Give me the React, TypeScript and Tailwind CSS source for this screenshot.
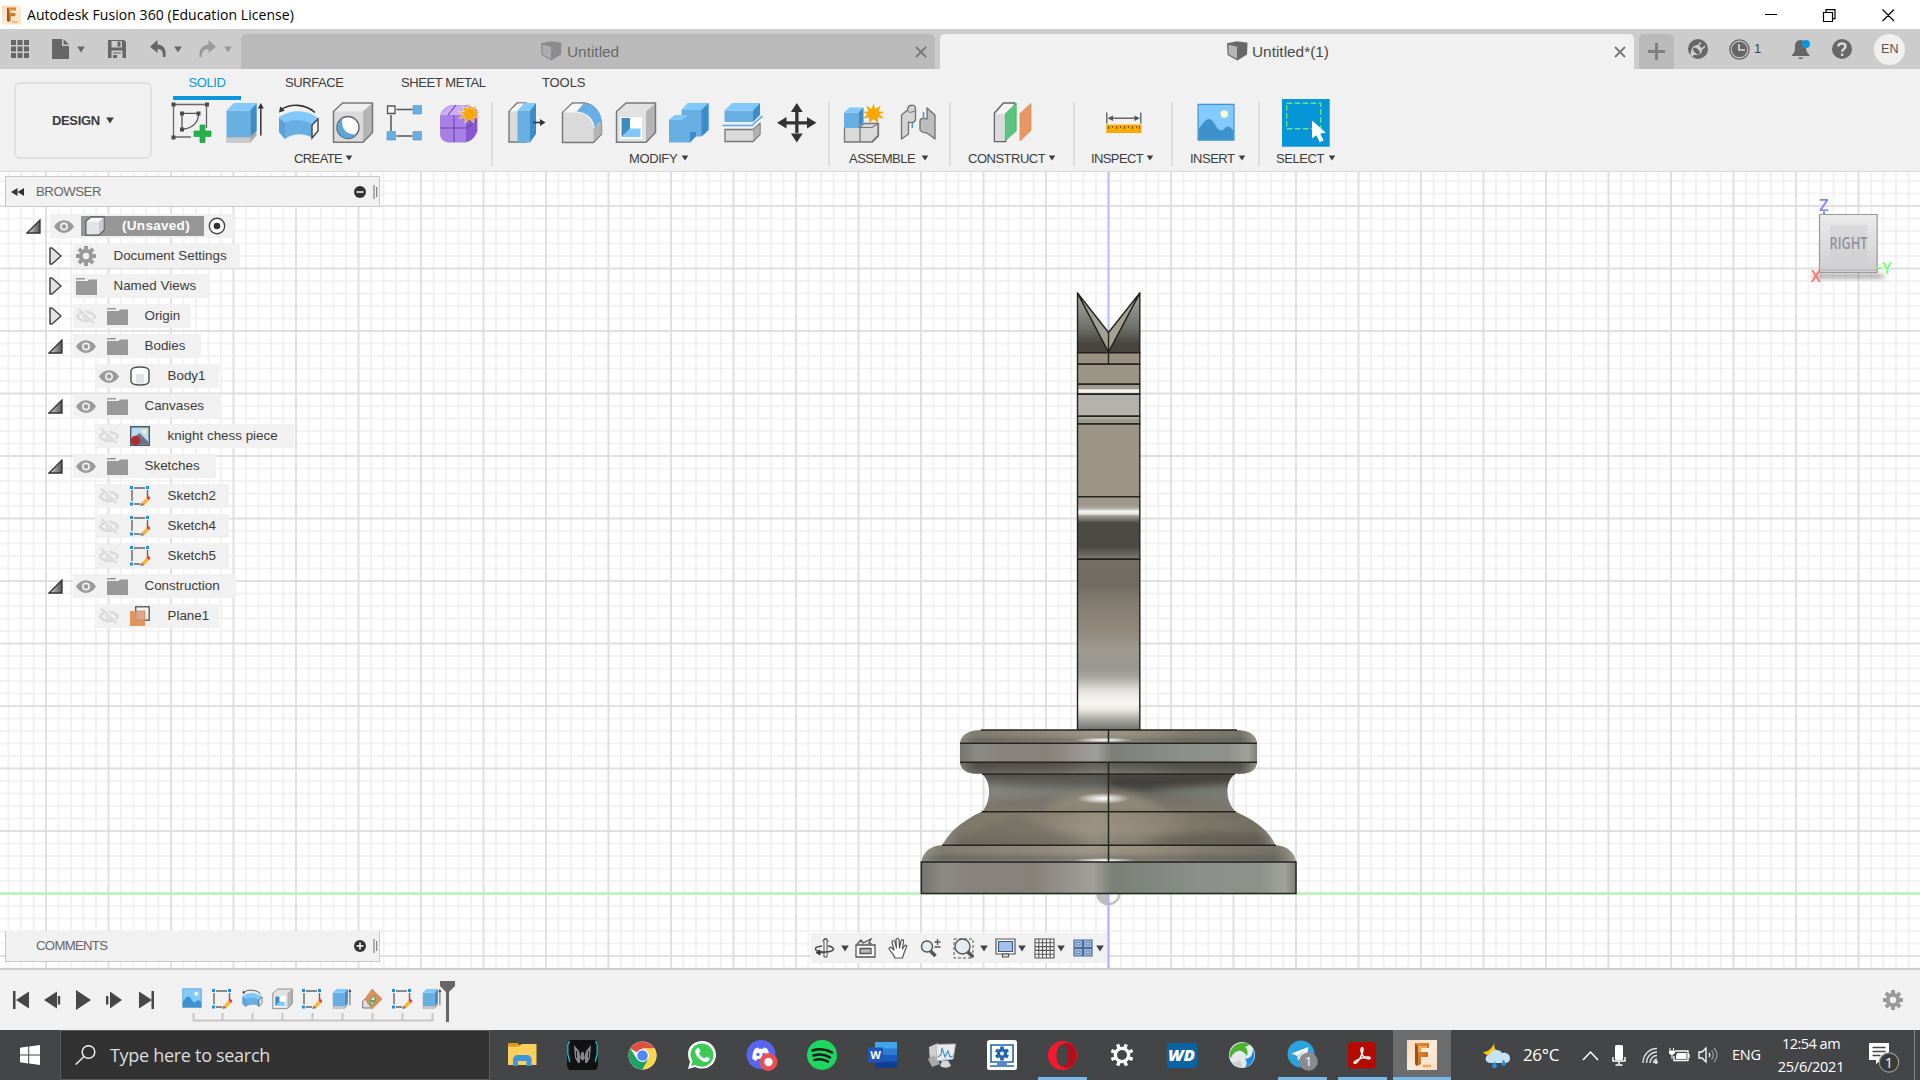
import React, { type ReactNode } from "react";

const ARIAL = "font-['Liberation_Sans',Arial,sans-serif]";
const SEGOE = "font-['Open_Sans','Noto_Sans',sans-serif]";

type IconProps = { className?: string };

/* ---------- shared small glyphs ---------- */

function Caret({ className = "" }: IconProps) {
  return (
    <svg className={className} width="8" height="7" viewBox="0 0 8 7">
      <path d="M.2.500h7.600L4 6.500z" fill="currentColor" />
    </svg>
  );
}

function FusionLogo({ className = "" }: IconProps) {
  return (
    <svg className={className} viewBox="0 0 30 30">
      <defs>
        <linearGradient id="flBg" x1="0" y1="0" x2="1" y2="1">
          <stop offset="0" stopColor="#fbd9b8" />
          <stop offset=".5" stopColor="#fdebda" />
          <stop offset="1" stopColor="#f9dcc0" />
        </linearGradient>
        <linearGradient id="flF" x1="0" y1="0" x2="1" y2="1">
          <stop offset="0" stopColor="#e8913a" />
          <stop offset="1" stopColor="#b8651b" />
        </linearGradient>
      </defs>
      <rect width="30" height="30" fill="url(#flBg)" />
      <path d="M8 3h14v5h-8v4h7v5h-7v7l-4 2-2-2z" fill="url(#flF)" />
      <path d="M8 3l3 3v18l-1 2-2-2z" fill="#9c5414" />
      <path d="M11 6h9v2h-6v4h-3z" fill="#f0a455" />
      <path d="M16 26h8" stroke="#ec9a4c" strokeWidth="2.4" strokeDasharray="2.2 .6" />
    </svg>
  );
}

function TabCube({ light, className = "" }: IconProps & { light?: boolean }) {
  return (
    <svg className={className} width="21" height="20" viewBox="0 0 21 20">
      <path d="M0 2.2L10 .2 20.500 1.800 20 13.500 10.500 19.600.5 14z" fill={light ? "#8b8b8b" : "#686868"} />
      <path d="M1.500 3.800l8.500 2v12L1.500 13.300z" fill={light ? "#aaadad" : "#b4b6b6"} />
    </svg>
  );
}

function CloseX() {
  return (
    <svg width="12" height="12" viewBox="0 0 12 12" fill="none" stroke="#7a7a7a" strokeWidth="1.900">
      <path d="M1 1l10 10M11 1L1 11" />
    </svg>
  );
}

/* ---------- ribbon icons: each viewBox is a window on one 48px tall strip ---------- */

function CreateSketch() {
  return (
    <svg width="42" height="48" viewBox="171 99 42 48" fill="none">
      <path d="M173.500 105v32M175 104.500h30M206.500 106v22M175 137h16" stroke="#666" strokeWidth="1.300" />
      <path d="M182 114v14M184 113.300h13M184 129c8-1 14-6 14.500-14" stroke="#555" strokeWidth="1.300" />
      <path d="M171.500 102.500h4v4h-4zM205 102.500h4v4h-4zM171.500 135.500h4v4h-4zM180 111.500h4v4h-4zM196.500 111.500h4v4h-4zM180 127.500h4v4h-4z" fill="#4b4b4b" />
      <path d="M200 125h5v6h6v5.500h-6v6h-5v-6h-6v-5.500h6z" fill="#25b14c" stroke="#169238" strokeWidth=".6" />
    </svg>
  );
}

function Extrude({ className = "w-10 h-12" }: IconProps) {
  return (
    <svg className={className} viewBox="225 99 40 48">
      <path d="M226.500 137h24l6-7v5.500l-6 7h-24z" fill="#aaa" />
      <path d="M226.500 137.500h24v5h-24z" fill="#c9c9c9" />
      <path d="M226.500 110.500h23.800V137h-23.800z" fill="#67aee3" />
      <path d="M226.500 110.500l7.500-7.500h22.700l-6.400 7.500z" fill="#83c8fb" />
      <path d="M250.300 110.500l6.400-7.500v27.500l-6.400 6.500z" fill="#3c8cc8" />
      <path d="M260.800 106v29.500" stroke="#333" strokeWidth="1.500" />
      <path d="M257.800 108.500l3-5.500 3 5.500z" fill="#333" />
    </svg>
  );
}

function Revolve({ className = "w-[42px] h-12" }: IconProps) {
  return (
    <svg className={className} viewBox="278 99 42 48">
      <path d="M281 109.500c10-6 24-6 34 3" fill="none" stroke="#333" strokeWidth="1.600" />
      <path d="M279 112.500l1.200-6 4.500 4.300z" fill="#333" />
      <path d="M279 117c12-8 28-8 39.500 1.500L312 125c-8-6-20-6-27 0l-6-5z" fill="#83c8fb" />
      <path d="M279 118l6 5c7-4 19-4 27 1v14c-7-5-19-5-27 1l-6-7z" fill="#67aee3" />
      <path d="M285 123v16l-6-7v-14z" fill="#5aa2da" />
      <path d="M312 125l6-6v12l-6 7z" fill="#f4f4f4" stroke="#444" strokeWidth="1.400" />
    </svg>
  );
}

function Hole() {
  return (
    <svg width="42" height="48" viewBox="331.500 99 42 48" strokeLinejoin="round">
      <path d="M333 111.500l9-8.500h30v29.500l-9.500 9.800H333z" fill="#dadada" />
      <path d="M333 111.500l9-8.500h30l-9.500 8.500z" fill="#f0f0f0" />
      <path d="M362.500 111.500l9.500-8.500v29.500l-9.500 9.800z" fill="#b5b5b5" />
      <path d="M333 111.500l9-8.500h30v29.500l-9.500 9.800H333z" fill="none" stroke="#777" strokeWidth="1.500" />
      <circle cx="347.500" cy="127.500" r="11" fill="#fff" stroke="#666" strokeWidth="1.400" />
      <path d="M342 118.500c-2 10 4 17 14 15.500-3 4-10 6-14.500 2.500-5.500-4.500-5.500-14 .5-18z" fill="#5ba6df" />
    </svg>
  );
}

function Pattern() {
  return (
    <svg width="36" height="48" viewBox="385.500 99 36 48">
      <path d="M396 109.500h16M390.500 115v16M396 136h16" stroke="#555" strokeWidth="1.500" />
      <path d="M387 106h7.500v7.500H387z" fill="#f5f5f5" stroke="#555" strokeWidth="1.300" />
      <path d="M412.500 105.500h8.500v8.500h-8.500zM386.500 131.500h8.500v8.500h-8.500zM412.500 131.500h8.500v8.500h-8.500z" fill="#67aee3" stroke="#4a94cf" strokeWidth=".6" />
    </svg>
  );
}

const STAR = "M0-10l1.800 5.400 5.300-3.400-2 5.900 6.200.300-5.400 2.500 4.700 4.400-6.200-1.200.100 6.100-4.500-4.600-4.500 4.600.100-6.100-6.200 1.200 4.700-4.400-5.400-2.500 6.200-.300-2-5.900 5.300 3.400z";

function FormIcon() {
  return (
    <svg width="41" height="48" viewBox="439 99 41 48">
      <path d="M440 116c2-8 8-10.500 14-11h13c8 2 10.500 6 10.500 12v14c-2 6-6 10-12 11.500h-17c-6-1-8.500-4-8.500-9z" fill="#a77fe6" />
      <path d="M441 115c3-7 8-9.500 14-9.500h10c6 1 8 3 8 5-4 4-8 4.500-14 4.500h-13c-2 0-4 1-5 0z" fill="#cdaef5" />
      <path d="M466 116l11-7v22c-2 6-6 10-11 11z" fill="#8859ce" />
      <path d="M440.500 128h26l10.500-7M454 115v27M448 115l8-10" stroke="#6b43a8" strokeWidth="1.100" fill="none" />
      <path transform="translate(469.500 113.500)" d={STAR} fill="#f9a800" stroke="#f0f0f0" strokeWidth=".5" />
    </svg>
  );
}

function PressPull() {
  return (
    <svg width="38" height="48" viewBox="508 99 38 48">
      <path d="M509 111.500l8-8.500h9v39h-17z" fill="#dadada" stroke="#777" strokeWidth="1.400" />
      <path d="M510 111l8-7.500h8l-8 8z" fill="#f7f7f7" />
      <path d="M517.500 110.500H530v32h-12.500z" fill="#67aee3" />
      <path d="M517.500 110.500l7-7.500H536l-6 7.500z" fill="#83c8fb" />
      <path d="M530 110.500l6-7.500v31l-6 8.500z" fill="#3c8cc8" />
      <path d="M533 122.500h8" stroke="#333" strokeWidth="1.600" />
      <path d="M540 119l5.500 3.500-5.500 3.500z" fill="#333" />
    </svg>
  );
}

function Fillet() {
  return (
    <svg width="42" height="48" viewBox="560.500 99 42 48">
      <path d="M562 112.500l10-9.500h12c10 2 16 10 17 22v9l-8 8.500h-31z" fill="#dadada" stroke="#777" strokeWidth="1.400" />
      <path d="M562.700 112.500l9.500-8.800h11l-8.500 8.800z" fill="#f7f7f7" />
      <path d="M593 128l8-6v11.500l-8 8z" fill="#b5b5b5" />
      <path d="M576 112l7.500-9c11 1 17.500 10 17.500 17.500l-7.500 7.500c-1-9-7-15.500-17.500-16z" fill="#67aee3" />
      <path d="M593.500 128c-1-9-7-15.500-17.500-16" fill="none" stroke="#f7f7f7" strokeWidth="1.200" />
    </svg>
  );
}

function Shell({ className = "w-[42px] h-12" }: IconProps) {
  return (
    <svg className={className} viewBox="614.500 99 42 48">
      <path d="M616 111.500l9.500-8.500H655v29.500l-9.500 9.800H616z" fill="#e2e2e2" />
      <path d="M645.500 111.500L655 103v29.500l-9.500 9.800z" fill="#b5b5b5" />
      <path d="M616 111.500l9.500-8.500H655v29.500l-9.500 9.800H616z" fill="none" stroke="#777" strokeWidth="1.500" />
      <path d="M619.500 117h22v22h-22z" fill="#fff" />
      <path d="M621 118h8.500v11L621 137z" fill="#3c8cc8" />
      <path d="M629.500 128.500H640v8.500h-19z" fill="#83c8fb" />
    </svg>
  );
}

function Combine() {
  return (
    <svg width="42" height="48" viewBox="668 99 42 48">
      <path d="M669 120l6-5h6.500v-5l6.500-7h20.500v27l-7 6.500H696l-6 6h-21z" fill="#67aee3" />
      <path d="M669 120l6-5h13l-6 5zM681.500 110l6.500-7h20.500l-7 7z" fill="#83c8fb" />
      <path d="M701.500 110l7-7v27l-7 6.500zM690 132h6v4l-6 6.500z" fill="#3c8cc8" />
    </svg>
  );
}

function SplitBody() {
  return (
    <svg width="42" height="48" viewBox="722 99 42 48">
      <path d="M724.500 110.500H753V122h-28.500z" fill="#67aee3" />
      <path d="M724.500 110.500l7.500-7.500h28l-7 7.500z" fill="#83c8fb" />
      <path d="M753 110.500l7-7.500v12l-7 7z" fill="#3c8cc8" />
      <path d="M722.500 125.500H752l10.500-9.500" stroke="#53a9ea" strokeWidth="1.600" fill="none" />
      <path d="M725 129.500h28l7-6v11l-7 7h-28z" fill="#dadada" stroke="#777" strokeWidth="1.300" />
      <path d="M753 130l6.500-5.500v9.500l-6.500 6.500z" fill="#b0b0b0" />
    </svg>
  );
}

function MoveIcon() {
  return (
    <svg width="40" height="48" viewBox="776.500 99 40 48" fill="#333">
      <path d="M794.700 112v9.200H786v3.300h8.700v8.500h3.300v-8.500h8.500v-3.300H798V112h4.200l-5.900-9-5.900 9zM786 117l-9.500 5.800 9.500 5.700zM806.500 117l9.500 5.800-9.500 5.700zM790.400 133.500h11.800l-5.900 9z" />
    </svg>
  );
}

function NewComponent() {
  return (
    <svg width="42" height="48" viewBox="843 99 42 48">
      <path d="M844.500 127H860v15h-15.500zM860 127l4-3.500h14.500V136l-6 6H860z" fill="#dadada" stroke="#777" strokeWidth="1.300" />
      <path d="M860 127.500h12l6-4v12l-6 6" fill="none" stroke="#777" strokeWidth="1.200" />
      <path d="M844 112.500h14.500V128H844z" fill="#67aee3" />
      <path d="M844 112.500l5.500-5H864l-5.500 5z" fill="#83c8fb" />
      <path d="M858.500 112.500l5-5v15l-5 5z" fill="#3c8cc8" />
      <path transform="translate(873.500 113.500)" d={STAR} fill="#f9a800" />
    </svg>
  );
}

function Joint() {
  return (
    <svg width="37" height="48" viewBox="899.500 99 37 48" strokeLinejoin="round">
      <path d="M901 115l6-5c0-6 8-6 8-2v12c-1 3-5 3-7 2v12l-7 5z" fill="#d4d4d4" stroke="#707070" strokeWidth="1.300" />
      <path d="M934.500 115l-8-7v11c-3-1-7-1-7 2v9c2 3 5 3 7 3l8 6z" fill="#bdbdbd" stroke="#707070" strokeWidth="1.300" />
      <path d="M907 110c0 3 5 3 8 0" fill="none" stroke="#707070" />
      <path d="M911.800 122v6M923 112v7" stroke="#3d9ae0" strokeWidth="1.500" />
    </svg>
  );
}

function Construct() {
  return (
    <svg width="40" height="48" viewBox="993 99 40 48">
      <path d="M994.500 113l9-10h11v8l-9 30.500h-11z" fill="#f5f5f5" stroke="#666" strokeWidth="1.500" />
      <path d="M995.200 114H1004v27h-8.800z" fill="#dadada" />
      <path d="M1005 114l11.300-11v28l-11.300 10z" fill="#5bc57f" stroke="#48ad6c" strokeWidth=".6" />
      <path d="M1020 113.500l11-10v27l-11 10.500z" fill="#e79763" stroke="#cf7f4a" strokeWidth=".6" />
    </svg>
  );
}

function Inspect() {
  return (
    <svg width="38" height="48" viewBox="1105 99 38 48">
      <path d="M1106.800 112.500v11M1140.800 112.500v11M1111 118.200h26" stroke="#666" strokeWidth="1.400" />
      <path d="M1107.500 118.200l5.500-2.700v5.400zM1140 118.200l-5.500-2.700v5.400z" fill="#555" />
      <path d="M1106.300 124.500h35.200v8.500h-35.200z" fill="#fba900" />
      <path d="M1108.500 126v3M1112.500 126v2M1116.500 126v3M1120.500 126v2M1124.500 126v3M1128.500 126v2M1132.500 126v3M1136.500 126v2M1139.500 126v3" stroke="#7a5200" strokeWidth="1.100" />
    </svg>
  );
}

function InsertImage({ className = "w-[38px] h-12" }: IconProps) {
  return (
    <svg className={className} viewBox="1196.500 99 38 48">
      <path d="M1197.600 104.300h35.900v35.900h-35.900z" fill="#82caff" stroke="#3f93cf" strokeWidth="1.200" />
      <path d="M1198 129c5-6 7-10 10.500-10 5 0 7 11 12 11.500 3 0 4-4 7-4 2.500 0 3.500 2.500 5.500 4v9.200h-35z" fill="#3d92ce" />
      <circle cx="1223.800" cy="114" r="3.800" fill="#fdfbd2" />
    </svg>
  );
}

function SelectIcon() {
  return (
    <svg width="48" height="48" viewBox="1282.300 99 48 48">
      <path d="M1282.300 99h47.700v47.700h-47.700z" fill="#0696d7" />
      <path d="M1287 103.200h34v25.600h-34z" fill="none" stroke="#6be08a" strokeWidth="1.400" strokeDasharray="5.500 2.500" />
      <path d="M1312.300 120.500v18l4.400-3.300 3.300 7 3.800-1.600-3.200-7 5.600-.8z" fill="#fff" />
    </svg>
  );
}

/* ---------- title bar and document tabs ---------- */

function TitleBar() {
  return (
    <header className={`flex h-[29px] items-center bg-white text-black ${SEGOE}`}>
      <FusionLogo className="ml-[2px] h-5 w-[19px]" />
      <span className="ml-[6px] whitespace-nowrap text-[14px] leading-none tracking-[0.06px]">Autodesk Fusion 360 (Education License)</span>
      <svg className="ml-auto mr-[25px]" width="130" height="14" viewBox="0 0 130 14" fill="none" stroke="#000" strokeWidth="1.200">
        <path d="M0 6.500h12M58.500 4.500h9v9h-9zM61 4.500V1.600h9v9h-2.500M117.500 1.500l11.500 11.500M129 1.500L117.500 13" />
      </svg>
    </header>
  );
}

function QuickAccess() {
  return (
    <div className="flex w-[241px] shrink-0 items-center text-[#666]">
      <svg className="ml-[11px]" width="18" height="18" viewBox="0 0 18 18" fill="currentColor">
        <path d="M0 0h5v5H0zM6.500 0h5v5h-5zM13 0h5v5h-5zM0 6.500h5v5H0zM6.500 6.500h5v5h-5zM13 6.500h5v5h-5zM0 13h5v5H0zM6.500 13h5v5h-5zM13 13h5v5h-5z" />
      </svg>
      <svg className="ml-[23px]" width="17" height="20" viewBox="0 0 17 20" fill="currentColor">
        <path d="M0 0h10v7h7v13H0zM11.500 0L17 5.500h-5.500z" />
      </svg>
      <Caret className="ml-2" />
      <svg className="ml-[23px]" width="18" height="18" viewBox="0 0 18 18">
        <path d="M0 0h16l2 2v16H0z" fill="currentColor" />
        <path d="M3.500 1h10.500v6.500H3.500zM3.500 10.500h11V18h-11z" fill="#ccc" />
        <path d="M9.500 1.500h3v5h-3zM5 12.500h8v1H5zM5 15h4v3H5z" fill="currentColor" />
      </svg>
      <svg className="ml-6" width="17" height="18" viewBox="0 0 17 18">
        <path d="M7.500 0v4.500c6 .3 9 4.500 8 12.500h-2.500c0-5-1-8-5.500-8V13L0 6.700z" fill="currentColor" />
      </svg>
      <Caret className="ml-[7px]" />
      <svg className="ml-[17px] text-[#999]" width="17" height="18" viewBox="0 0 17 18">
        <path d="M9.500 0v4.500c-6 .3-9.500 4.500-9 12.500h2.300c0-5 1.700-8 6.700-8V13L17 6.700z" fill="currentColor" />
      </svg>
      <Caret className="ml-2 text-[#999]" />
    </div>
  );
}

function DocumentTabs() {
  return (
    <div className={`flex h-10 bg-[#ccc] ${ARIAL}`}>
      <QuickAccess />
      <div className="mt-[5px] flex w-[694px] items-center rounded-t-[5px] bg-[#bababa] text-[15.4px] text-[#696969]">
        <TabCube light className="ml-[300px] -mt-[2px]" />
        <span className="ml-[5px]">Untitled</span>
        <span className="ml-auto mr-2"><CloseX /></span>
      </div>
      <div className="ml-[5px] mt-[5px] flex w-[694px] items-center rounded-t-[5px] bg-[#f1f1f1] text-[15.4px] text-[#4a4a4a]">
        <TabCube className="ml-[287px] -mt-[2px]" />
        <span className="ml-[4px]">Untitled*(1)</span>
        <span className="ml-auto mr-2"><CloseX /></span>
      </div>
      <div className="ml-[5px] mt-[5px] flex w-[35px] items-center justify-center rounded-t-[5px] bg-[#bababa]">
        <svg width="17" height="17" viewBox="0 0 17 17" fill="#808080"><path d="M7 0h3v7h7v3h-7v7H7v-7H0V7h7z" /></svg>
      </div>
      <div className="flex flex-1 items-center text-[#666]">
        <svg className="ml-[14px]" width="20" height="20" viewBox="0 0 20 20">
          <circle cx="10" cy="10" r="10" fill="currentColor" />
          <path d="M3 16c1-4 1-8 5-9 2-.5 3 .5 4 1.500s1.500 2.500 1 4c-1 3-5 3-8 2.500zM9 8l4-4.500M12.500 11.500L17 7" fill="#ccc" stroke="#ccc" strokeWidth="1.700" />
          <path d="M5 17.500c-2-4-1-7 2-9" stroke="#ccc" strokeWidth="1.500" fill="none" />
          <path d="M7 10.500l3 3" stroke="#666" strokeWidth="4" strokeLinecap="round" />
        </svg>
        <svg className="ml-[21px]" width="21" height="21" viewBox="0 0 21 21" fill="none">
          <circle cx="10.500" cy="10.500" r="9.600" stroke="currentColor" strokeWidth="1.400" />
          <circle cx="10.500" cy="10.500" r="7.800" fill="currentColor" />
          <path d="M10 5v6h6" stroke="#ddd" strokeWidth="1.600" />
        </svg>
        <span className="ml-1 text-[13px] text-[#444]">1</span>
        <svg className="ml-[31px]" width="19" height="21" viewBox="0 0 19 21">
          <path d="M8.500 1c4 0 5.500 3 5.500 6.500 0 5 1.500 6.500 3.500 8.500v1H0v-1c2-2 3-3.500 3-8.500C3 4 4.500 1 8.500 1zM6 18.500h5.500c-1 2-4.500 2-5.500 0z" fill="currentColor" />
          <circle cx="14" cy="5" r="4" fill="#0696d7" />
        </svg>
        <svg className="ml-[21px]" width="20" height="20" viewBox="0 0 20 20">
          <circle cx="10" cy="10" r="10" fill="currentColor" />
          <path d="M6.300 7.500C6.500 3.500 13.500 3.500 13.500 7.500c0 2.500-3.400 2.500-3.400 5.300M10.100 14.500v2.500" fill="none" stroke="#d8d8d8" strokeWidth="2.400" />
        </svg>
        <span className="ml-[22px] flex h-[31px] w-[31px] items-center justify-center rounded-full bg-[#f0f0f0] text-[12.500px] text-[#555]">EN</span>
      </div>
    </div>
  );
}

/* ---------- ribbon ---------- */

function RibbonGroup({ className, pad, label, labelWidth, last, children }: {
  className: string; pad: string; label: string; labelWidth: string; last?: boolean; children: ReactNode;
}) {
  return (
    <>
      <section className={`shrink-0 ${className}`}>
        <div className="flex h-12 items-start">{children}</div>
        <div className={`mt-[4px] flex h-4 items-center text-[13px] text-[#3c3c3c] ${pad}`}>
          <span className={`whitespace-nowrap ${labelWidth}`}>{label}</span>
          <Caret className="-mt-[3px] h-[6px]" />
        </div>
      </section>
      {!last && <div className="mt-[3px] h-16 w-[2px] shrink-0 bg-[#dcdcdc]" />}
    </>
  );
}

function Ribbon() {
  return (
    <div className={`flex h-[102px] bg-[#f1f1f1] text-[13px] text-[#3c3c3c] ${ARIAL}`}>
      <div className="w-[160px] shrink-0 pl-[14px] pt-[13px]">
        <button className="flex h-[77px] w-[138px] items-center rounded-[6px] border-2 border-[#e0e0e0] pl-9 text-[13px] font-bold tracking-[-0.35px]">
          <span className="w-[54px] text-left">DESIGN</span>
          <Caret className="h-[7px]" />
        </button>
      </div>
      <div className="flex-1">
        <nav className="flex h-[30px] tracking-[-0.4px]">
          <span className="ml-[13px] -mb-px flex h-[31px] w-[68px] justify-center border-b-4 border-[#0d97d8] pt-[4px] text-[#0d97d8]">SOLID</span>
          <span className="ml-[44px] w-[116px] pt-[4px]">SURFACE</span>
          <span className="w-[141px] pt-[4px]">SHEET METAL</span>
          <span className="pt-[4px] tracking-[-0.1px]">TOOLS</span>
        </nav>
        <div className="flex">
          <RibbonGroup className="w-[331px]" pad="pl-[134px]" label="CREATE" labelWidth="w-[51px] tracking-[-0.6px]">
            <span className="ml-[11px]"><CreateSketch /></span>
            <span className="ml-3"><Extrude /></span>
            <span className="ml-[13px]"><Revolve /></span>
            <span className="ml-[11.500px]"><Hole /></span>
            <span className="ml-3"><Pattern /></span>
            <span className="ml-[17.500px]"><FormIcon /></span>
          </RibbonGroup>
          <RibbonGroup className="w-[335px]" pad="pl-[136px]" label="MODIFY" labelWidth="w-[52px] tracking-[-0.4px]">
            <span className="ml-[15px]"><PressPull /></span>
            <span className="ml-[14.500px]"><Fillet /></span>
            <span className="ml-3"><Shell /></span>
            <span className="ml-[11.500px]"><Combine /></span>
            <span className="ml-3"><SplitBody /></span>
            <span className="ml-[12.500px]"><MoveIcon /></span>
          </RibbonGroup>
          <RibbonGroup className="w-[119px]" pad="pl-[19px]" label="ASSEMBLE" labelWidth="w-[72px] tracking-[-0.5px]">
            <span className="ml-[13px]"><NewComponent /></span>
            <span className="ml-[14.500px]"><Joint /></span>
          </RibbonGroup>
          <RibbonGroup className="w-[122px]" pad="pl-[17px]" label="CONSTRUCT" labelWidth="w-[80px] tracking-[-0.5px]">
            <span className="ml-[42px]"><Construct /></span>
          </RibbonGroup>
          <RibbonGroup className="w-[96px]" pad="pl-4" label="INSPECT" labelWidth="w-[55px] tracking-[-0.6px]">
            <span className="ml-[30px]"><Inspect /></span>
          </RibbonGroup>
          <RibbonGroup className="w-[85px]" pad="pl-[17px]" label="INSERT" labelWidth="w-[48px] tracking-[-0.5px]">
            <span className="ml-[23.500px]"><InsertImage /></span>
          </RibbonGroup>
          <RibbonGroup className="w-[86px]" pad="pl-4" label="SELECT" labelWidth="w-[52px] tracking-[-0.45px]" last>
            <span className="ml-[22px]"><SelectIcon /></span>
          </RibbonGroup>
        </div>
      </div>
    </div>
  );
}

/* ---------- browser panel ---------- */

function Eye() {
  return (
    <svg width="20" height="13" viewBox="0 0 20 13">
      <path d="M0 6.500C5-2 15-2 20 6.500 15 15 5 15 0 6.500z" fill="#9a9a9a" />
      <circle cx="10" cy="6.500" r="4" fill="#f1f1f1" />
      <circle cx="10" cy="6.500" r="2.300" fill="#9a9a9a" />
    </svg>
  );
}

function EyeOff() {
  return (
    <svg width="20" height="16" viewBox="0 0 20 16" fill="none" stroke="#d9d9d9">
      <path d="M1 8.500c4-6 14-6 18 0-4 6-14 6-18 0z" strokeWidth="2.400" />
      <circle cx="10" cy="8.500" r="2.500" strokeWidth="1.600" />
      <path d="M3 0l16 16" stroke="#f1f1f1" strokeWidth="4" />
      <path d="M2.500 1L17.500 15" strokeWidth="2" />
    </svg>
  );
}

function Folder() {
  return (
    <svg width="21" height="17" viewBox="0 0 21 17" fill="#999">
      <path d="M0 0h9v1.500H0zM0 3h9l2.500 0L13 1.500h8V17H0z" />
    </svg>
  );
}

function Gear({ className = "" }: IconProps) {
  return (
    <svg className={className} width="20" height="20" viewBox="-10 -10 20 20">
      <g fill="#9a9a9a">
        {[0, 45, 90, 135].map((a) => (
          <rect key={a} x="-2" y="-10" width="4" height="20" transform={`rotate(${a})`} />
        ))}
        <circle r="7.200" />
      </g>
      <circle r="3.200" fill="#f1f1f1" />
    </svg>
  );
}

function Sketch({ className = "" }: IconProps) {
  return (
    <svg className={className} width="20" height="20" viewBox="0 0 20 20">
      <path d="M2 4v11M4 2h11M17.500 4v7M4 18h6" stroke="#666" strokeWidth="1.400" fill="none" />
      <path d="M0 0h3v3H0zM16 0h3v3h-3zM0 16.500h3v3H0z" fill="#1b8fe6" />
      <path d="M12 17l5.500-6 2 2-5 5.500z" fill="#fbb733" stroke="#fbb733" />
      <path d="M17 11.500l1.500-1.300 1.500 2-1.300 1.300z" fill="#ee3b46" stroke="#ee3b46" />
      <path d="M10.500 19.500l1-2.500 2.500 2z" fill="#777" stroke="#777" strokeWidth=".5" />
    </svg>
  );
}

function BodyIcon() {
  return (
    <svg width="20" height="20" viewBox="0 0 20 20">
      <path d="M1 5c0-2.500 2-4 9-4s9 1.500 9 4v10c0 2.500-2 4-9 4s-9-1.500-9-4z" fill="#fff" stroke="#4c5560" strokeWidth="1.500" />
      <path d="M6 8h8v9.500c-3 .5-5 .3-8 0z" fill="#e1e3e8" />
    </svg>
  );
}

function CanvasIcon() {
  return (
    <svg width="20" height="20" viewBox="0 0 20 20">
      <path d="M.7.700h18.600v18.600H.7z" fill="#b6ddf5" stroke="#4b5867" strokeWidth="1.400" />
      <path d="M1.500 13l8-6 9 9v2.500h-17z" fill="#6b7482" />
      <circle cx="14.500" cy="5.500" r="2.200" fill="#fff2a8" />
      <circle cx="5.500" cy="14.500" r="4" fill="#8a3b45" stroke="#d31c2b" strokeWidth="1.500" />
      <path d="M3 17l5-5" stroke="#d31c2b" strokeWidth="1.400" />
    </svg>
  );
}

function PlaneIcon() {
  return (
    <svg width="20" height="20" viewBox="0 0 20 20">
      <path d="M5.700.8h13.500v13.500H5.700z" fill="#f3f3f3" stroke="#666" strokeWidth="1.500" />
      <path d="M0 5h15v15H0z" fill="#e2945f" />
      <path d="M6 5h9v9H6z" fill="#dba988" stroke="#c98655" strokeWidth=".8" />
    </svg>
  );
}

function DocCube() {
  return (
    <svg width="20" height="20" viewBox="0 0 20 20" strokeLinejoin="round">
      <path d="M1 5l5-4h13v13l-5 5H1z" fill="#fbfbfb" stroke="#5a6068" strokeWidth="1.400" />
      <path d="M1.800 5.500H14v12.700H1.800z" fill="#e2e4ea" />
      <path d="M14 5.500L18.500 1.500v12L14 18z" fill="#c8ccd4" />
    </svg>
  );
}

function Twisty({ open }: { open?: boolean }) {
  return open ? (
    <svg width="15" height="15" viewBox="0 0 15 15">
      <defs>
        <linearGradient id="tw" x1="0" x2="1"><stop offset="0" stopColor="#ddd" /><stop offset="1" stopColor="#555" /></linearGradient>
      </defs>
      <path d="M1 14L14 1v13z" fill="url(#tw)" stroke="#333" strokeWidth="1.300" />
    </svg>
  ) : (
    <svg width="13" height="18" viewBox="0 0 13 18">
      <path d="M1 1l2 0 9 8-9 8-2 0z" fill="#e3e3e3" stroke="#444" strokeWidth="1.500" strokeLinejoin="round" />
    </svg>
  );
}

type Row = { indent: string; twisty?: "open" | "closed"; eye?: "on" | "off"; icon: ReactNode; label: string; box: string };

const ROWS: Row[] = [
  { indent: "pl-[49px]", twisty: "closed", icon: <Gear />, label: "Document Settings", box: "w-[167px]" },
  { indent: "pl-[49px]", twisty: "closed", icon: <Folder />, label: "Named Views", box: "w-[137px]" },
  { indent: "pl-[49px]", twisty: "closed", eye: "off", icon: <Folder />, label: "Origin", box: "w-[118px]" },
  { indent: "pl-[48px]", twisty: "open", eye: "on", icon: <Folder />, label: "Bodies", box: "w-[128px]" },
  { indent: "pl-[95px]", eye: "on", icon: <BodyIcon />, label: "Body1", box: "w-[124px]" },
  { indent: "pl-[48px]", twisty: "open", eye: "on", icon: <Folder />, label: "Canvases", box: "w-[148px]" },
  { indent: "pl-[95px]", eye: "off", icon: <CanvasIcon />, label: "knight chess piece", box: "w-[199px]" },
  { indent: "pl-[48px]", twisty: "open", eye: "on", icon: <Folder />, label: "Sketches", box: "w-[143px]" },
  { indent: "pl-[95px]", eye: "off", icon: <Sketch />, label: "Sketch2", box: "w-[134px]" },
  { indent: "pl-[95px]", eye: "off", icon: <Sketch />, label: "Sketch4", box: "w-[134px]" },
  { indent: "pl-[95px]", eye: "off", icon: <Sketch />, label: "Sketch5", box: "w-[134px]" },
  { indent: "pl-[48px]", twisty: "open", eye: "on", icon: <Folder />, label: "Construction", box: "w-[163px]" },
  { indent: "pl-[95px]", eye: "off", icon: <PlaneIcon />, label: "Plane1", box: "w-[124px]" },
];

function TreeRow({ row }: { row: Row }) {
  return (
    <li className={`flex h-[30px] items-center ${row.indent}`}>
      {row.twisty && (
        <span className={row.twisty === "open" ? "w-[25px]" : "w-6"}><Twisty open={row.twisty === "open"} /></span>
      )}
      <div className={`flex h-6 items-center bg-[#f1f1f1] ${row.box} ${row.twisty ? "pl-[3px]" : "pl-[4px]"}`}>
        {row.eye && <span className="w-[31px] shrink-0">{row.eye === "on" ? <Eye /> : <EyeOff />}</span>}
        <span className="w-[37.500px] shrink-0">{row.icon}</span>
        <span className="whitespace-nowrap pt-px text-[13.400px] text-[#3c3c3c] [font-kerning:none]">{row.label}</span>
      </div>
    </li>
  );
}

function GripBars() {
  return (
    <svg width="5" height="14" viewBox="0 0 5 14"><path d="M1 0v14M3.700 2v10" stroke="#777" strokeWidth="1.100" /></svg>
  );
}

function BrowserPanel() {
  return (
    <aside className={`absolute left-0 top-[5px] ${ARIAL}`}>
      <div className="ml-[5px] flex h-[31px] w-[375px] items-center border border-[#c8c8c8] bg-[#f1f1f1] text-[13.200px] text-[#666]">
        <svg className="ml-[5px]" width="13" height="8" viewBox="0 0 13 8" fill="#333"><path d="M6.500 0v8L0 4zM13 0v8L6.500 4z" /></svg>
        <span className="ml-3 tracking-[-0.45px]">BROWSER</span>
        <svg className="ml-auto mr-[7.500px]" width="12" height="12" viewBox="0 0 12 12"><circle cx="6" cy="6" r="6" fill="#333" /><path d="M2.500 6h7" stroke="#fff" strokeWidth="1.500" /></svg>
        <span className="mr-px"><GripBars /></span>
      </div>
      <ul className="mt-[4px]">
        <li className="flex h-[30px] items-center pl-[26px]">
          <span className="w-6"><Twisty open /></span>
          <div className="flex h-6 w-[184px] items-center bg-[#f1f1f1] pl-1">
            <span className="w-[27px]"><Eye /></span>
            <div className="flex h-5 w-[123px] items-center bg-[#969696] pl-1 text-[13.500px] font-bold text-white">
              <DocCube />
              <span className="ml-[17px] tracking-[0.3px]">(Unsaved)</span>
            </div>
            <svg className="ml-1" width="18" height="18" viewBox="0 0 18 18"><circle cx="9" cy="9" r="7.700" fill="#fff" stroke="#444" strokeWidth="1.400" /><circle cx="9" cy="9" r="3.300" fill="#333" /></svg>
          </div>
        </li>
        {ROWS.map((row) => <TreeRow key={row.label} row={row} />)}
      </ul>
    </aside>
  );
}

function CommentsPanel() {
  return (
    <div className={`absolute left-[5px] top-[760px] flex h-[31px] w-[375px] items-center border border-t-0 border-[#c8c8c8] bg-[#f1f1f1] text-[13.200px] text-[#666] ${ARIAL}`}>
      <span className="ml-[30px] tracking-[-0.7px]">COMMENTS</span>
      <svg className="ml-auto mr-[7.500px]" width="12" height="12" viewBox="0 0 12 12"><circle cx="6" cy="6" r="6" fill="#333" /><path d="M2.500 6h7M6 2.500v7" stroke="#fff" strokeWidth="1.500" /></svg>
      <span className="mr-px"><GripBars /></span>
    </div>
  );
}

function NavBar() {
  return (
    <div className="absolute left-[811px] top-[762px] flex h-[30px] w-[296px] items-center bg-[#f1f1f1] text-[#444]">
      <svg className="ml-[4px]" width="20" height="20" viewBox="0 0 20 20" fill="none" stroke="#444">
        <path d="M9 1h3v18H9zM7.500 3.500L10.500 0l3 3.500" fill="#fff" strokeWidth="1" />
        <path d="M7 8c-9 1-9 5 1 6 8 .5 12-2 10-4-1-1-3-2-5-2M4 14.500h6" strokeWidth="1.500" />
        <path d="M5 12v5l-4-2.500z" fill="#333" />
      </svg>
      <Caret className="ml-[6px]" />
      <svg className="ml-[6px]" width="21" height="20" viewBox="0 0 21 20" fill="none" stroke="#555" strokeWidth="1.300">
        <path d="M1 7h19v12H1z" fill="#fff" /><path d="M5 10.500h11v5H5z" fill="#b8bcc2" /><path d="M2 6l4-4 2 3 8-4-2 4 3 1" fill="#ddd" />
      </svg>
      <svg className="ml-3" width="21" height="21" viewBox="0 0 21 21" fill="#fff" stroke="#555" strokeWidth="1.200" strokeLinejoin="round">
        <path d="M7 20c-1-4-4-6-6-9 0-2 2-2 3-1l2 2-2-8c0-2 2-2 3 0l1.500 6-.5-8c0-2 2.500-2 3 0l.5 8 1.500-7c.5-2 2.500-1.500 2.500 0l-1 8 2-3c1-1.500 3-1 2 1-2 4-3 7-4 11z" />
      </svg>
      <svg className="ml-[11px]" width="21" height="20" viewBox="0 0 21 20" fill="none" stroke="#555">
        <path d="M10.500 13l5 5" strokeWidth="3.500" /><circle cx="7" cy="8.500" r="5.500" fill="#e3edf1" strokeWidth="1.400" /><path d="M17.500 1v6M14.500 4h6M14.500 9h6" strokeWidth="1.300" />
      </svg>
      <svg className="ml-[12px]" width="21" height="21" viewBox="0 0 21 21" fill="none" stroke="#555">
        <path d="M1 1h19v19H1z" strokeDasharray="3 2" /><path d="M14 13l6 6" strokeWidth="3.500" /><circle cx="9.500" cy="8.500" r="7.500" fill="#e3edf1" strokeWidth="1.400" />
      </svg>
      <Caret className="ml-[6px]" />
      <svg className="ml-[7px]" width="21" height="21" viewBox="0 0 21 21" stroke="#555" strokeWidth="1.200">
        <path d="M1 1h19v15H1z" fill="#fff" /><path d="M3.500 3.500h14v10h-14z" fill="#a5c2ea" stroke="#39598c" /><path d="M7.500 16h6v3h-6z" fill="#ddd" />
      </svg>
      <Caret className="ml-[2px]" />
      <svg className="ml-[8px]" width="21" height="21" viewBox="0 0 21 21" stroke="#555" strokeWidth="1.100" fill="#fff">
        <path d="M1 1h19v19H1zM4.800 1v19M8.600 1v19M12.400 1v19M16.200 1v19M1 4.800h19M1 8.600h19M1 12.400h19M1 16.200h19" />
      </svg>
      <Caret className="ml-[2px]" />
      <svg className="ml-[8px]" width="20" height="18" viewBox="0 0 20 18" stroke="#4b6a98" strokeWidth="1.200" fill="#9db9e0">
        <path d="M1 1h8.500v7.500H1zM10.500 1H19v7.500h-8.500zM1 9.500h8.500V17H1zM10.500 9.500H19V17h-8.500z" /><path d="M3.500 3.500h3.500v2.500H3.500zM13 3.500h3.500v2.500H13zM3.500 12h3.500v2.500H3.500zM13 12h3.500v2.500H13z" fill="#c6d8f0" strokeWidth=".7" />
      </svg>
      <Caret className="ml-[3px]" />
    </div>
  );
}

/* ---------- modelling canvas ---------- */

function VGradient({ id, stops }: { id: string; stops: [number, string][] }) {
  return (
    <linearGradient id={id} x1="0" y1="0" x2="0" y2="1">
      {stops.map(([o, c]) => <stop key={o} offset={o} stopColor={c} />)}
    </linearGradient>
  );
}

function HGradient({ id, stops }: { id: string; stops: [number, string, number?][] }) {
  return (
    <linearGradient id={id} x1="0" y1="0" x2="1" y2="0">
      {stops.map(([o, c, a]) => <stop key={o} offset={o} stopColor={c} stopOpacity={a ?? 1} />)}
    </linearGradient>
  );
}

function Viewport() {
  return (
    <svg className="absolute inset-0" width="1920" height="797" viewBox="0 171 1920 797">
      <defs>
        <pattern id="minor" x="1108.500" y="893.500" width="12.500" height="12.500" patternUnits="userSpaceOnUse">
          <path d="M0 0h12.500M0 0v12.500M12.500 0v12.500M0 12.500h12.500" stroke="#f0f0f0" strokeWidth="1.600" fill="none" />
        </pattern>
        <pattern id="major" x="1108.500" y="893.500" width="62.500" height="62.500" patternUnits="userSpaceOnUse">
          <path d="M0 0h62.500M0 0v62.500M62.500 0v62.500M0 62.500h62.500" stroke="#dcdcdc" strokeWidth="1.500" fill="none" />
        </pattern>
        <VGradient id="ears" stops={[[0, "#a5a69e"], [0.3, "#8b8d86"], [0.6, "#6c6c67"], [0.85, "#48443f"], [1, "#47433e"]]} />
        <VGradient id="roll" stops={[[0, "#9c9484"], [0.14, "#9f998d"], [0.19, "#b5b2a9"], [0.23, "#f4f3ef"], [0.27, "#e9e8e4"], [0.31, "#9b9b94"], [0.42, "#4c4a44"], [0.8, "#4b4943"], [0.93, "#6a6a65"], [1, "#7f7f79"]]} />
        <VGradient id="neck" stops={[[0, "#716e66"], [0.15, "#706b61"], [0.25, "#837b6f"], [0.42, "#918a7b"], [0.52, "#9c9a91"], [0.64, "#99978f"], [0.69, "#a9a6a0"], [0.77, "#e3e2de"], [0.84, "#f7f6f3"], [0.88, "#e9e8e4"], [0.95, "#9d9d97"], [1, "#71726d"]]} />
        <HGradient id="band" stops={[[0, "#75756f"], [0.06, "#8c8b86"], [0.13, "#87837c"], [0.3, "#86827a"], [0.4, "#98958f"], [0.46, "#a09f9a"], [0.51, "#7c7f78"], [0.6, "#818580"], [0.75, "#8c908a"], [0.9, "#8e918b"], [0.97, "#a1a39b"], [1, "#7d7f79"]]} />
        <VGradient id="lip" stops={[[0, "#9d9482"], [0.45, "#948d80"], [0.75, "#77746b"], [1, "#8a8a84"]]} />
        <VGradient id="under" stops={[[0, "#47453f"], [0.5, "#56554f"], [1, "#6e6e69"]]} />
        <VGradient id="waist" stops={[[0, "#4e4c47"], [0.4, "#666762"], [0.7, "#777268"], [1, "#857d6e"]]} />
        <VGradient id="bell" stops={[[0, "#8f8674"], [0.5, "#968d7d"], [1, "#7d786d"]]} />
        <HGradient id="sideShade" stops={[[0, "#9a9a92", 0.6], [0.06, "#56544c", 0.35], [0.3, "#6b665a", 0.2], [0.45, "#b3aa99", 0.25], [0.55, "#9b9079", 0.2], [0.75, "#5a564c", 0.35], [0.94, "#56544c", 0.5], [1, "#a7a99d", 0.8]]} />
        <radialGradient id="spot"><stop offset="0" stopColor="#fff" /><stop offset=".4" stopColor="#fff" stopOpacity=".65" /><stop offset="1" stopColor="#fff" stopOpacity="0" /></radialGradient>
        <linearGradient id="cubeFace" x1="0" y1="0" x2="0" y2="1"><stop offset="0" stopColor="#ebebeb" /><stop offset="1" stopColor="#cfcfcf" /></linearGradient>
        <filter id="soft" x="-30%" y="-100%" width="160%" height="300%"><feGaussianBlur stdDeviation="2.500" /></filter>
        <filter id="haze" x="-30%" y="-60%" width="160%" height="220%"><feGaussianBlur stdDeviation="4" /></filter>
        <clipPath id="waistClip"><path d="M982 774c10 8 9 28 0 38h254c-11-10-12-30-1-38z" /></clipPath>
        <clipPath id="bellClip"><path d="M981.700 811.700h254c18 8 33 18 39.600 33.600h-333c7-14 21-25 39.400-33.600z" /></clipPath>
      </defs>
      <path d="M0 171h1920v797H0z" fill="#fff" />
      <path d="M0 171h1920v797H0z" fill="url(#minor)" />
      <path d="M0 171h1920v797H0z" fill="url(#major)" />
      <path d="M0 893.500h1920" stroke="#aef5ae" strokeWidth="2" />
      <path d="M1108.500 171v797" stroke="#bcbcfb" strokeWidth="1.800" />

      {/* origin marker */}
      <path d="M1096 893a12.400 12.400 0 0 0 12.400 12.400V893z" fill="#bdbdbd" />
      <path d="M1108.500 904a11 11 0 0 0 11-11" fill="none" stroke="#c4c4c4" strokeWidth="2.500" />
      <path d="M1108.500 893v75" stroke="#b2b2fb" strokeWidth="1.500" />

      {/* head and neck */}
      <g stroke="#22221f" strokeWidth="1.400" strokeLinejoin="round">
        <path d="M1077.500 293l31 59 31.300-59v60h-62.300z" fill="url(#ears)" />
        <path d="M1077.500 293l31 39.500 31.300-39.500-31.300 59z" fill="#a5a294" />
        <path d="M1077.500 352.700h62.300v11.600h-62.300z" fill="#9a9180" />
        <path d="M1108.500 332.500v32" fill="none" />
        <path d="M1077.500 364.300h62.300v20h-62.300z" fill="#9c9484" />
        <path d="M1077.500 384.300h62.300v10h-62.300z" fill="#a09a8e" />
        <path d="M1078.500 389.200h60.500v3.600h-60.500z" fill="#f3f2ee" stroke="none" />
        <path d="M1077.500 394.300h62.300v22h-62.300z" fill="#b3b2ad" />
        <path d="M1077.500 416.300h62.300v7.700h-62.300z" fill="#9a978b" />
        <path d="M1078.500 418h60.500" stroke="#c3c2bc" strokeWidth="1" />
        <path d="M1077.500 424h62.300v72.700h-62.300z" fill="#9c9484" />
        <path d="M1077.500 496.700h62.300v62.600h-62.300z" fill="url(#roll)" />
        <path d="M1077.500 559.300h62.300V730h-62.300z" fill="url(#neck)" />
      </g>

      {/* upper collar */}
      <path d="M960 743.300c1-8 7-12.500 20-13.300h257c13 .8 19 5 20 13.300z" fill="url(#lip)" />
      <path d="M960 743.300c1-8 7-12.500 20-13.300h257c13 .8 19 5 20 13.300z" fill="url(#sideShade)" />
      <ellipse cx="1104" cy="740" rx="30" ry="2.500" fill="url(#spot)" />
      <path d="M960 743.300h297v19H960z" fill="url(#band)" />
      <path d="M960 762.300h297c-1 7-6 11.400-16 11.400H976c-10 0-15-4.400-16-11.400z" fill="url(#under)" />
      <path d="M960 762.300h297c-1 7-6 11.400-16 11.400H976c-10 0-15-4.400-16-11.400z" fill="url(#sideShade)" />

      {/* waist */}
      <g clipPath="url(#waistClip)">
        <path d="M975 770h270v45H975z" fill="url(#waist)" />
        <path d="M1108 774h130v12l-80 4h-50z" fill="#43403a" filter="url(#haze)" />
        <path d="M985 782c50 8 80 6 118 10-40 8-80 4-118 10z" fill="#8e8f89" opacity=".7" filter="url(#haze)" />
        <path d="M1235 784c-30 2-60 4-90 8 30 2 50 8 90 12z" fill="#7d827e" opacity=".8" filter="url(#haze)" />
        <path d="M1040 812c20-16 40-22 64-22s44 8 64 22z" fill="#968d7d" opacity=".8" filter="url(#haze)" />
        <ellipse cx="1103" cy="798.500" rx="27" ry="5.500" fill="url(#spot)" />
      </g>

      {/* bell */}
      <path d="M981.700 811.700h254c18 8 33 18 39.600 33.600h-333c7-14 21-25 39.400-33.600z" fill="url(#bell)" />
      <g clipPath="url(#bellClip)">
        <path d="M942 811h334v35H942z" fill="url(#sideShade)" />
        <path d="M950 850c20-20 50-30 70-34 20 10 50 20 70 30z" fill="#6a655b" opacity=".5" filter="url(#haze)" />
        <path d="M1140 846c30-14 80-16 130-10v14z" fill="#5b574e" opacity=".6" filter="url(#haze)" />
      </g>

      {/* foot */}
      <path d="M921.300 862c2-10 9-16 20-16.700h334c12 .7 19 7 20.700 16.700z" fill="url(#lip)" />
      <path d="M921.300 862c2-10 9-16 20-16.700h334c12 .7 19 7 20.700 16.700z" fill="url(#sideShade)" />
      <ellipse cx="1104" cy="860.500" rx="32" ry="2.500" fill="url(#spot)" />
      <path d="M921.300 862H1296v31.700H921.300z" fill="url(#band)" />
      <g fill="none" stroke="#242421" strokeWidth="1.500">
        <path d="M981 730h256M960 743.300h297M960 762.300h297M982 774h253M981.700 811.700h254M942 845.300h334M921.300 862H1296v31.500H921.300z" />
        <path d="M1108.500 730v13.300M1108.500 762v100" />
      </g>

      {/* orientation cube */}
      <path d="M1815 274h64l8 4h-76z" fill="#777" opacity=".8" filter="url(#soft)" />
      <path d="M1819.500 214.500h57.700v58h-57.700z" fill="url(#cubeFace)" stroke="#9a9a9a" strokeWidth="1.200" />
      <path d="M1830 225h37v37h-37z" fill="#cdced1" opacity=".5" />
      <path d="M1820 270h57" stroke="#aaa" strokeWidth=".8" />
      <g fontFamily="'Open Sans', sans-serif">
        <text x="1829.500" y="249" fontSize="16.500" fontWeight="600" fill="#8f9299" textLength="38" lengthAdjust="spacingAndGlyphs">RIGHT</text>
        <text x="1819" y="210.500" fontSize="17" fontWeight="600" fill="#8585ff">Z</text>
        <text x="1811" y="282" fontSize="16" fontWeight="600" fill="#ff7575">X</text>
        <text x="1882" y="274" fontSize="17" fontWeight="600" fill="#7dfc7d">Y</text>
      </g>
      <path d="M1824 211.500v2.500" stroke="#8080ff" strokeWidth="2" />
      <path d="M1877 268h4" stroke="#7dfc7d" strokeWidth="2" />
    </svg>
  );
}

/* ---------- timeline ---------- */

function Timeline() {
  const features: ReactNode[] = [
    <InsertImage className="h-[25px] w-5" />,
    <Sketch />,
    <Revolve className="h-6 w-[21px]" />,
    <Shell className="h-6 w-[21px]" />,
    <Sketch />,
    <Extrude className="h-6 w-5" />,
    <svg width="20" height="20" viewBox="0 0 20 20">
      <path d="M.7 19V12l5-4v6l4 1v4z" fill="#ddd" stroke="#777" />
      <path d="M10 0l10 10-10 10L3 10z" fill="#e08e57" stroke="#c97b46" strokeWidth=".6" />
      <path d="M8 11l4.500-5 .5 6zM8 13l5-.5-4 4z" fill="#d9f0d9" stroke="#2f9b4e" strokeWidth=".8" />
    </svg>,
    <Sketch />,
    <Extrude className="h-6 w-5" />,
  ];
  return (
    <footer className="flex h-[62px] border-t-2 border-[#ccc] bg-[#f1f1f1]">
      <svg className="ml-[13px] mt-[20px] shrink-0" width="142" height="20" viewBox="13 990 142 20" fill="#474747">
        <path d="M13 991h2.500v18H13zM29 991.500v17l-13-8.500zM57 991.500v17L44 1000zM57.800 996h2.400v8.500h-2.400zM76 990l15 10-15 10zM106 996h2.400v8.500H106zM110 991.500v17l12-8.500zM139 991.500v17l13-8.500zM151.500 991h2.500v18h-2.500z" />
      </svg>
      <div className="ml-[27px] w-[276px] pt-[16px]">
        <div className="flex h-[25px] items-center">
          {features.map((f, i) => <span key={i} className="flex w-[30px] shrink-0 items-center">{f}</span>)}
        </div>
        <svg className="ml-[10px] mt-[2px]" width="244" height="9" viewBox="0 0 244 9" fill="none" stroke="#c6c6c6" strokeWidth="2">
          <path d="M1.500 0v7.500h239V0M30.500 0v7M60.500 0v7M90.500 0v7M120.500 0v7M150.500 0v7M180.500 0v7M210.500 0v7" />
        </svg>
      </div>
      <svg className="-ml-[18px] mt-[11px] shrink-0" width="15" height="41" viewBox="0 0 15 41" fill="#666">
        <path d="M0 0h15v5L9 11v30H6V11L0 5z" />
      </svg>
      <Gear className="ml-auto mr-[17px] mt-[20px]" />
    </footer>
  );
}

/* ---------- taskbar ---------- */

function Slot({ state = "idle", children }: { state?: "idle" | "running" | "active"; children: ReactNode }) {
  const bg = state === "active" ? "bg-[#6b6c6d]" : "";
  const line = state === "idle" ? "" : state === "active" ? "w-[58px] bg-[#76b9ed]" : "w-[49px] bg-[#76b9ed]";
  return (
    <div className={`flex h-[50px] w-[60px] shrink-0 flex-col items-center ${state === "active" ? "px-px" : ""}`}>
      <div className={`flex h-[47px] w-[58px] items-center justify-center pt-[3px] ${bg}`}>{children}</div>
      <div className={`h-[3px] ${line}`} />
    </div>
  );
}

function TaskbarApps() {
  return (
    <div className="ml-[2px] flex">
      <Slot>
        <svg width="29" height="25" viewBox="0 0 29 25"><path d="M0 1h10l2 2.500H0z" fill="#e5a00c" /><path d="M0 2h12l2-1h14.500v21H0z" fill="#fdcf5b" /><path d="M0 0h10l2 3.500H0z" fill="#dd9a0a" /><path d="M5 23V15l3-3h12.500l3 3v8h-5v-5H10v5z" fill="#3a96dd" /></svg>
      </Slot>
      <Slot>
        <svg width="31" height="30" viewBox="0 0 31 30"><path d="M2 0h27l2 4v22l-2 4H2l-2-4V4z" fill="#111" /><path d="M2.500 1L.8 5v9l2 8M28.500 1l1.700 4v9l-2 8" fill="none" stroke="#19c3d6" strokeWidth="1.300" /><path d="M7 5l5 6 2 7v-5l1.500-1.500L17 13v5l2-7 5-6-1 13-3 5h-2v-5l-2.500 3-2.500-3v5h-2l-3-5z" fill="#85898d" /><path d="M9.500 11v7M21.500 11v7" stroke="#222" strokeWidth="1" /></svg>
      </Slot>
      <Slot>
        <svg width="29" height="29" viewBox="-14.500 -14.500 29 29"><circle r="14" fill="#fff" /><path d="M0 0L-12.100-7A14 14 0 0 1 12.100-7H0z" fill="#dd5144" /><path d="M12.100-7A14 14 0 0 1 0 14L6 3 0-7z" fill="#fdd54d" /><path d="M-12.100-7A14 14 0 0 0 0 14L6 3-6 3z" fill="#1ca261" /><circle r="6.500" fill="#fff" /><circle r="5.300" fill="#4c8bf5" /></svg>
      </Slot>
      <Slot>
        <svg width="28" height="28" viewBox="0 0 28 28"><path d="M0 28l2-7C-4 8 5 0 14 0c8 0 14 6 14 14 0 9-9 17-21 12z" fill="#fff" /><path d="M3 25l1.500-5C-1 10 6 2.500 14 2.500c6 0 11.500 5 11.500 11.500 0 8-8.500 15-18 10z" fill="#3fca57" /><path d="M9 7.500c1-1 2-.8 2.500.5l.8 2c.3.900-.8 1.700-1.300 2.400 1.300 2.500 3 4 5.500 5 .8-.600 1.500-2 2.400-1.600l2.600 1.300c.8 2-2 4-4 4C12 20.500 6 13 7.500 9z" fill="#fff" /></svg>
      </Slot>
      <Slot>
        <svg width="32" height="31" viewBox="0 0 32 31"><circle cx="15" cy="14.500" r="14.500" fill="#5865f2" /><path d="M9 8.500l3-1 .8 1.200h4.400L18 7.500l3 1c2 3 3 7 2.500 10.500L20 21l-1.300-2h-7.400L10 21l-3.500-2C6 15.500 7 11.500 9 8.500z" fill="#fff" /><circle cx="12" cy="14.500" r="1.700" fill="#5865f2" /><circle cx="18" cy="14.500" r="1.700" fill="#5865f2" /><circle cx="22.500" cy="22" r="9" fill="#ed4e55" /><circle cx="22.500" cy="22" r="4.200" fill="#fff" /></svg>
      </Slot>
      <Slot>
        <svg width="30" height="30" viewBox="0 0 30 30"><circle cx="15" cy="15" r="15" fill="#1ed760" /><path d="M5.500 10.500c6-2 14-1.200 19.500 2M6.500 15.500c5-1.500 12-1 16.500 2M7.500 20c4-1.200 9.500-.8 13.500 1.600" stroke="#1b1b1b" strokeWidth="2.600" strokeLinecap="round" fill="none" /></svg>
      </Slot>
      <Slot>
        <svg width="29" height="28" viewBox="0 0 29 28"><path d="M7 1h22v7H7z" fill="#41a5ee" /><path d="M7 7.500h22V14H7z" fill="#2b7cd3" /><path d="M7 14h22v7H7z" fill="#185abd" /><path d="M7 20.500h22V27H7z" fill="#103f91" /><path d="M0 6.500h15v15H0z" fill="#1d56b8" /><text x="7.500" y="18" fontSize="11" fontWeight="700" fill="#fff" textAnchor="middle" fontFamily="'Open Sans', sans-serif">W</text></svg>
      </Slot>
      <Slot>
        <svg width="29" height="25" viewBox="0 0 29 25"><path d="M1 4l9-4v4l-2 12-6 3z" fill="#cfcfcf" /><path d="M0 16l6-4 6 9-8 3z" fill="#a9a9a9" /><path d="M8 1.500L27.500 1 25 16 9 18z" fill="#e8ecef" stroke="#b9b9b9" /><path d="M10 14l3-2 1-7 3 9 3-6 2 6 3-1" stroke="#3f8fc9" fill="none" strokeWidth="1.200" /><path d="M14 18l6-.5 3 5c-3 3-8 3-11 0z" fill="#d6d6d6" /></svg>
      </Slot>
      <Slot>
        <svg width="30" height="30" viewBox="0 0 30 30"><rect width="30" height="30" rx="2.500" fill="#fff" /><path d="M4 5h22v17H4z" fill="none" stroke="#1f64ad" strokeWidth="1.600" /><path d="M3 26h24M10 24h10" stroke="#1f64ad" strokeWidth="1.500" /><g transform="translate(15 13.500)" fill="#1f64ad">{[0, 60, 120].map((a) => <rect key={a} x="-1.800" y="-7" width="3.600" height="14" transform={`rotate(${a})`} />)}<circle r="5" /><circle r="2" fill="#fff" /></g></svg>
      </Slot>
      <Slot state="running">
        <svg width="29" height="29" viewBox="0 0 29 29"><path fillRule="evenodd" d="M14.500 0a14.500 14.500 0 1 0 0 29 14.500 14.500 0 0 0 0-29zm0 3.500c3.500 0 6 4.500 6 11s-2.500 11-6 11-6-4.500-6-11 2.500-11 6-11z" fill="#f4192e" /><path d="M14.500 25.500c3.500 0 6-4.500 6-11s-2.500-11-6-11c4-4 14 1 14 11s-9 15-14 11z" fill="#b10f1c" /></svg>
      </Slot>
      <Slot>
        <svg width="24" height="24" viewBox="-12 -12 24 24" fill="#fff">{[22, 67, 112, 157].map((a) => <rect key={a} x="-1.700" y="-11.500" width="3.400" height="23" transform={`rotate(${a})`} />)}<circle r="8.300" /><circle r="5" fill="#444546" /></svg>
      </Slot>
      <Slot>
        <svg width="30" height="25" viewBox="0 0 30 25"><rect width="30" height="25" rx="2" fill="#0a64a4" /><text x="14.500" y="18" fontSize="15" fontStyle="italic" fontWeight="800" fill="#fff" textAnchor="middle" textLength="27" lengthAdjust="spacingAndGlyphs" fontFamily="'Open Sans', sans-serif">WD</text></svg>
      </Slot>
      <Slot>
        <svg width="28" height="28" viewBox="0 0 28 28"><circle cx="14" cy="14" r="13" fill="#e4e9eb" /><path d="M1.500 13C4 3 14-1 22 3.500L17 6c3 2 3 6 2 9-3-4-6-6-9-5-4 1-6 4-7 7-1-1-1.500-2-1.500-4z" fill="#4fb332" /><path d="M25 8c4 8-1 17-9 19.500 4-4 3-7 1-10 5 1 8-4 8-9.500z" fill="#1a8ae0" /><path d="M4 21c3 1 6 0 8-3l2 8c-4 0-8-2-10-5z" fill="#c9ced0" /></svg>
      </Slot>
      <Slot state="running">
        <svg width="32" height="32" viewBox="0 0 32 32"><circle cx="15" cy="15" r="13.500" fill="#2ca2df" /><path d="M5.500 14.500L22.500 8l-3 14.500-5-3.500-2.500 2.500-.5-4.500z" fill="#fff" /><path d="M11.500 17l8-6.500-5.500 8z" fill="#b7d9ec" /><circle cx="22.500" cy="22.500" r="9.300" fill="#8b8b8b" /><text x="22.500" y="27" fontSize="13" fill="#fff" textAnchor="middle" fontFamily="'Open Sans', sans-serif">1</text></svg>
      </Slot>
      <Slot state="running">
        <svg width="28" height="27" viewBox="0 0 28 27"><rect width="28" height="26.500" rx="4" fill="#b30b00" /><path d="M6 20.500c1.500-3 14-7 16-5 1 2-4 1.500-6.500-1-2-2-3.500-7.500-1.500-9 2.500 0 0 9-4 13.500-1.500 2-3.500 3-4 1.500z" fill="none" stroke="#fff" strokeWidth="1.500" /></svg>
      </Slot>
      <Slot state="active"><FusionLogo className="h-[30px] w-[30px]" /></Slot>
    </div>
  );
}

function Tray() {
  return (
    <div className="flex flex-1 items-center text-white">
      <svg className="ml-[31px]" width="28" height="27" viewBox="0 0 28 27"><path d="M12 0c-2 4 0 9 5 11-4 4-13 4-17-1 6 0 9-4 12-10z" fill="#fdc70b" /><path d="M8 21c-7 0-7-8-1-8.500C8 7 17 6.500 19 11c5-1 8 2 8 5s-2 5-5 5z" fill="#c5e3f7" /><path d="M11.500 19l2.500 5c0 3-5 3-5 0zM20.500 17.500l2.500 4c0 3-4.500 3-4.500 0z" fill="#2d8fe0" /></svg>
      <span className="ml-[12px] w-[59px] whitespace-nowrap text-[17px] tracking-[-0.35px]">26°C</span>
      <svg width="17" height="11" viewBox="0 0 17 11" fill="none" stroke="#fff" strokeWidth="1.500"><path d="M1 10L8.500 2 16 10" /></svg>
      <svg className="ml-[13px]" width="14" height="21" viewBox="0 0 14 21"><rect x="3" width="8" height="15" rx="1.500" fill="#fff" /><path d="M1 12v4h12v-4M7 16v3M3.500 20h7" stroke="#fff" strokeWidth="1.400" fill="none" /></svg>
      <svg className="ml-4" width="16" height="17" viewBox="0 0 16 17" fill="none" stroke="#ddd" strokeWidth="1.400"><path d="M1 16C1 8 7 1.500 15 1.500M4.500 16c0-6 4.500-11 10.500-11M8 16c0-4 3-7.500 7-7.500M11.500 16c0-2 1.500-4 3.500-4" /><circle cx="14" cy="15" r="1.200" fill="#fff" /></svg>
      <svg className="ml-[11px]" width="21" height="14" viewBox="0 0 21 14" fill="none" stroke="#fff" strokeWidth="1.300"><path d="M6 3h13v9.500H5V8M20 6v4" /><path d="M8 5h9.500v6H7V8z" fill="#fff" stroke="none" /><path d="M1 0v2.500M4.500 0v2.500M0 3h5.500v2L4 6.500H2L0 5zM3 6v5" fill="#fff" strokeWidth="1" /></svg>
      <svg className="ml-[8px]" width="20" height="18" viewBox="0 0 20 18" fill="none" stroke="#fff" strokeWidth="1.300"><path d="M1 6h3l4-4v14l-4-4H1z" /><path d="M11 7c1 1 1 3 0 4" /><path d="M13.500 4.500c2.500 2.500 2.500 6.500 0 9M16 2c4 4 4 10 0 14" stroke="#999" /></svg>
      <span className="ml-[14px] w-[43px] text-[14.500px] tracking-[-0.2px]">ENG</span>
      <div className="w-[72px] whitespace-nowrap text-center text-[14.500px] leading-[23px] tracking-[-0.25px]">
        <div className="tracking-[-0.5px]">12:54 am</div>
        <div>25/6/2021</div>
      </div>
      <svg className="ml-[22px] mt-[6px]" width="32" height="30" viewBox="0 0 32 30"><path d="M0 0h20v17h-8l-5 4v-4H0z" fill="#fff" /><path d="M3.500 4.500h13M3.500 8.500h13M3.500 12.500h8" stroke="#444" strokeWidth="1.500" /><circle cx="20" cy="19.500" r="9.700" fill="#3b3b3b" stroke="#999" strokeWidth="1.200" /><text x="20" y="25" fontSize="14.500" fill="#fff" textAnchor="middle">1</text></svg>
      <div className="ml-auto mr-[5px] h-[50px] w-px bg-[#888]" />
    </div>
  );
}

function Taskbar() {
  return (
    <div className={`flex h-[50px] bg-[#444546] ${SEGOE}`}>
      <div className="flex w-[60px] shrink-0 items-center justify-center">
        <svg width="20" height="20" viewBox="0 0 20 20" fill="#fff"><path d="M0 2.800l8.200-1.200v8H0zM9.200 1.400L20 0v9.600H9.200zM0 10.500h8.200v8L0 17.200zM9.200 10.500H20V20L9.200 18.600z" /></svg>
      </div>
      <div className="flex w-[430px] shrink-0 items-center border border-[#5a5a5a] bg-[#323232]">
        <svg className="ml-[14px]" width="21" height="20" viewBox="0 0 21 20" fill="none" stroke="#eee" strokeWidth="1.500"><circle cx="13.500" cy="7" r="6.300" /><path d="M9 11.500L.7 19.500" /></svg>
        <span className="ml-[14px] whitespace-nowrap text-[18px] tracking-[-0.3px] text-[#dcdcdc]">Type here to search</span>
      </div>
      <TaskbarApps />
      <Tray />
    </div>
  );
}

export default function App() {
  return (
    <div className="flex h-[1080px] w-[1920px] flex-col overflow-hidden bg-white">
      <TitleBar />
      <DocumentTabs />
      <Ribbon />
      <main className="relative h-[797px] shrink-0 overflow-hidden">
        <Viewport />
        <div className="absolute inset-x-0 top-0 h-px bg-[#d8d8d8]" />
        <BrowserPanel />
        <CommentsPanel />
        <NavBar />
      </main>
      <Timeline />
      <Taskbar />
    </div>
  );
}
